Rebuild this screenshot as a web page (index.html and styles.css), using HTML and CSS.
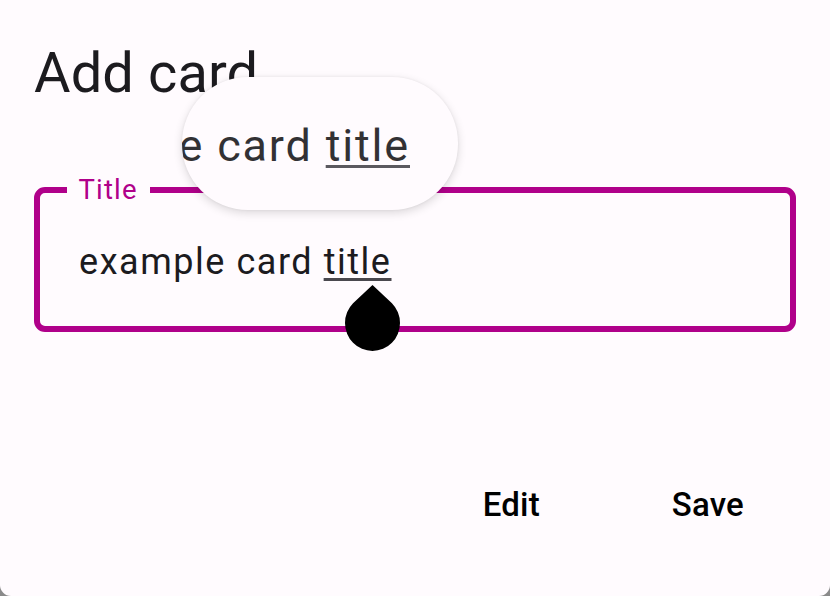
FILE: index.html
```html
<!DOCTYPE html>
<html lang="en">
<head>
<meta charset="utf-8">
<title>Add card</title>
<link rel="stylesheet" href="styles.css">
</head>
<body>
<main class="dialog">
  <h1 class="dialog-title">Add card</h1>
  <fieldset class="field">
    <legend class="field-label">Title</legend>
    <p class="field-value">example card <u class="compose">title</u></p>
    <svg class="handle" width="55" height="66" viewBox="0 0 56 66" preserveAspectRatio="none" aria-hidden="true"><path d="M28 0 L47.8 18.2 A28 28 0 1 1 8.2 18.2 Z" fill="#000"/></svg>
  </fieldset>
  <div class="actions">
    <span class="action">Edit</span>
    <span class="action">Save</span>
  </div>
  <div class="magnifier"><p class="magnifier-text">example card <u class="compose">title</u></p></div>
</main>
</body>
</html>
```
FILE: styles.css
```css
* { box-sizing: border-box; }
html, body { margin: 0; height: 100%; background: #8a8a8a; }
body { font-family: Roboto, "Noto Sans", sans-serif; overflow: hidden; }
.dialog {
  position: relative;
  width: 830px;
  height: 596px;
  background: #fffbfe;
  border-radius: 0 0 11px 11px;
  padding: 37px 34px 0;
  overflow: hidden;
}
.dialog-title {
  margin: 0;
  font-size: 56px;
  line-height: 72px;
  font-weight: 400;
  letter-spacing: 0.1px;
  color: #1c1b1f;
}
.field {
  position: relative;
  width: 762px;
  height: 159px;
  margin: 64px 0 0;
  padding: 0 0 0 39px;
  border: 6px solid #b0008a;
  border-radius: 11px;
}
.field-label {
  margin-left: -12px;
  padding: 0 12px 0 11.5px;
  font-size: 27.5px;
  line-height: 34px;
  letter-spacing: 1.15px;
  font-weight: 380;
  color: #b0008a;
}
.field-value {
  margin: 28px 0 0;
  font-size: 36px;
  line-height: 54px;
  letter-spacing: 1.54px;
  font-weight: 380;
  color: #1c1b1f;
  white-space: nowrap;
}
.compose {
  text-decoration-color: #4a484e;
  text-decoration-thickness: 2.5px;
  text-underline-offset: 4px;
}
.handle {
  position: absolute;
  left: 305px;
  top: 78px;
}
.actions {
  display: flex;
  justify-content: flex-end;
  gap: 132px;
  margin-top: 153px;
  padding-right: 52px;
}
.action {
  font-size: 33px;
  line-height: 40px;
  font-weight: 480;
  letter-spacing: 0.2px;
  color: #000;
}
.magnifier {
  position: absolute;
  left: 182px;
  top: 77px;
  width: 276px;
  height: 133px;
  border-radius: 66px;
  background: #fffbfe;
  box-shadow: 0 3px 10px rgba(0, 0, 0, 0.14), 0 0 3px rgba(0, 0, 0, 0.06);
  overflow: hidden;
}
.magnifier-text {
  position: absolute;
  right: 48px;
  top: 39px;
  margin: 0;
  font-size: 45px;
  line-height: 60px;
  letter-spacing: 1.82px;
  font-weight: 380;
  color: #1c1b1f;
  opacity: 0.9;
  white-space: nowrap;
}
```
